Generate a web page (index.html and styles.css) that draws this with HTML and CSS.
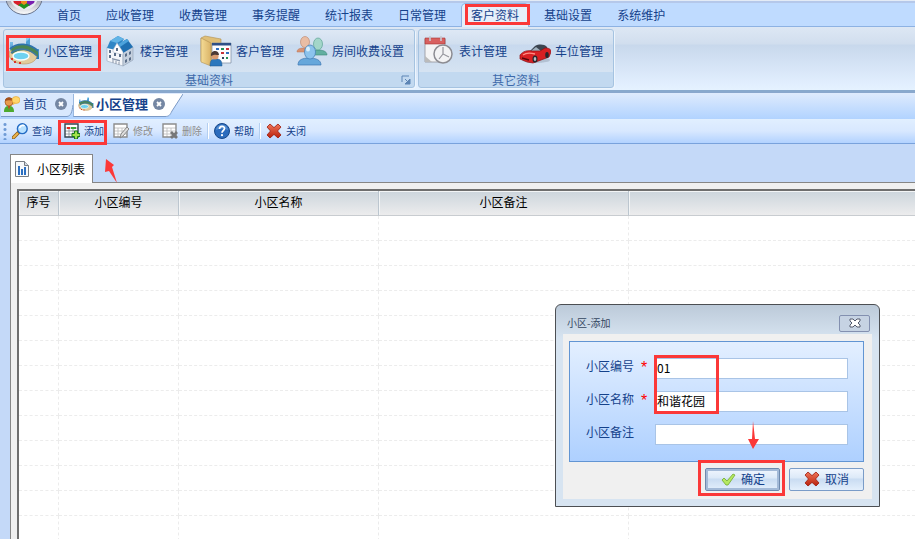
FILE: index.html
```html
<!DOCTYPE html>
<html lang="zh-CN">
<head>
    <meta charset="UTF-8">
    <meta name="viewport" content="width=device-width, initial-scale=1.0">
    <title>小区管理</title>
    <link rel="stylesheet" href="styles.css">
</head>
<body>
    <!-- 共用图标 -->
    <svg class="defs" width="0" height="0" aria-hidden="true">
        <defs>
            <linearGradient id="blue" x1="0" y1="0" x2="0" y2="1">
                <stop offset="0" stop-color="#8fd0f4"/>
                <stop offset="1" stop-color="#2375b8"/>
            </linearGradient>
            <linearGradient id="red" x1="0" y1="0" x2="0" y2="1">
                <stop offset="0" stop-color="#f0765a"/>
                <stop offset="1" stop-color="#b8200c"/>
            </linearGradient>
            <linearGradient id="folder" x1="0" y1="0" x2="1" y2="0">
                <stop offset="0" stop-color="#f5dc96"/>
                <stop offset="1" stop-color="#d9b266"/>
            </linearGradient>
            <linearGradient id="orb" x1="0" y1="0" x2="0" y2="1">
                <stop offset=".5" stop-color="#8d93a3"/>
                <stop offset="1" stop-color="#ffffff"/>
            </linearGradient>
            <symbol id="pool" viewBox="0 0 32 32">
                <path d="M2 7h3v12H2zM18 3h4v8h-4zM28 14h3v10h-3z" fill="url(#blue)"/>
                <path d="M22 3l-4 4v3h4z" fill="#4f9fd6"/>
                <path d="M1 19c0-5 7-8 14-8 8 0 14 4 14 9s-5 9-13 9C8 29 1 25 1 19z" fill="#e2cb9c" stroke="#b8935a" stroke-width=".6"/>
                <path d="M3 14c7-7 20-6 27 2v6C23 14 12 13 4 19z" fill="#4a8653"/>
                <path d="M2 14c7-7 20-6 28 2" fill="none" stroke="#2f73ab" stroke-width="1.800"/>
                <path d="M3 18c8-6 18-5 26 3" fill="none" stroke="#41789f" stroke-width="1.600"/>
                <ellipse cx="13" cy="21" rx="8" ry="4" fill="#6fd2f0" stroke="#f8ffff" stroke-width="1.300"/>
                <path d="M3 23h2v2H3zM6 26h2v2H6zM11 27h2v2h-2z" fill="#d8382a"/>
            </symbol>
            <symbol id="close-x" viewBox="0 0 16 16">
                <path d="M4 1l4 3.600 4-3.600 3 3-3.500 4 3.500 4-3 3-4-3.600-4 3.600-3-3 3.500-4L1 4z" fill="url(#red)" stroke="#9c1a0b" stroke-width=".8" stroke-linejoin="round"/>
            </symbol>
            <symbol id="grid" viewBox="0 0 16 16">
                <path d="M1 1h13v13H1z" fill="#fff" stroke="currentColor" stroke-width="1.400"/>
                <path d="M1 5h13M1 8h13M1 11h13M5 5v9M9 5v9" stroke="currentColor" stroke-width=".8" opacity=".6"/>
            </symbol>
            <symbol id="tab-close" viewBox="0 0 12 12">
                <circle cx="6" cy="6" r="6" fill="#7587a3"/>
                <path d="M4 4l4 4M8 4l-4 4" stroke="#fff" stroke-width="1.800"/>
            </symbol>
        </defs>
    </svg>

    <!-- 主菜单 -->
    <nav class="menu">
        <svg class="orb" width="40" height="16" viewBox="0 0 40 16" aria-hidden="true">
            <circle cx="20" cy="-5" r="18.500" fill="url(#orb)" stroke="#69748c"/>
            <circle cx="20" cy="-5" r="14" fill="#e9ebf0"/>
            <path d="M9-1h9v5l-3 1-5-3z" fill="#d81f2c"/>
            <path d="M31-1h-9v5l3 1 5-3z" fill="#7a1fb0"/>
            <path d="M14 4l6-3 6 3-6 4z" fill="#21931f"/>
            <path d="M17-1h6v3l-3 2-3-2z" fill="#f08a1c"/>
        </svg>
        <a href="#">首页</a>
        <a href="#">应收管理</a>
        <a href="#">收费管理</a>
        <a href="#">事务提醒</a>
        <a href="#">统计报表</a>
        <a href="#">日常管理</a>
        <a href="#" class="active">客户资料</a>
        <a href="#">基础设置</a>
        <a href="#">系统维护</a>
    </nav>

    <!-- 功能区 -->
    <div class="ribbon">
        <section class="group">
            <div class="group-items">
                <button type="button"><svg width="32" height="32"><use href="#pool"/></svg>小区管理</button>
                <button type="button">
                    <svg width="32" height="32" viewBox="0 0 32 32">
                        <path d="M3 12l16 5v14L3 26z" fill="#f4f6fa" stroke="#9aa9bd" stroke-width=".6"/>
                        <path d="M19 17l10-5v13l-10 6z" fill="#c5d0de" stroke="#8d9db3" stroke-width=".6"/>
                        <path d="M3 13L6 6l8-5 6 3-8 11z" fill="#2f86c6"/>
                        <path d="M6 6l8-5 6 3-7 4z" fill="#62b4e6"/>
                        <path d="M14 9l9-5 6 8-10 6z" fill="#2070b2"/>
                        <path d="M14 9l9-5 2 2-9 6z" fill="#4da3dc"/>
                        <path d="M9 15l4-7 6 9v3L9 17z" fill="#fdfdfe" stroke="#a5b2c4" stroke-width=".5"/>
                        <path d="M5 15h2v3H5zM5 20h2v3H5zM12 13h2v3h-2zM10 18h2v3h-2zM15 19h2v3h-2zM21 19l2-1v3l-2 1zM25 17l2-1v3l-2 1zM21 25l2-1v3l-2 1zM25 23l2-1v3l-2 1z" fill="#5b6f8a"/>
                        <path d="M8 23l8 2v1.500l-8-2z" fill="#8997ab"/>
                        <path d="M9 25v3M12 26v3M15 27v3" stroke="#8794a8"/>
                    </svg>楼宇管理</button>
                <button type="button">
                    <svg width="32" height="32" viewBox="0 0 32 32">
                        <path d="M1 3l4-2 16 3v22H1z" fill="#dfbf78" stroke="#b08f4f" stroke-width=".6"/>
                        <path d="M12 8h19v20H12z" fill="#fdfdff" stroke="#76869e" stroke-width=".7"/>
                        <path d="M12 8h19v2.500H12z" fill="#2d4f86"/>
                        <path d="M16 13h3v2h-3zM26 17h3v2h-3z" fill="#2f6fc0"/>
                        <path d="M21 13h3v2h-3zM26 22h2v2h-2z" fill="#22925a"/>
                        <path d="M26 13h3v2h-3zM21 17h3v2h-3z" fill="#c8333a"/>
                        <path d="M22 22h2v2h-2z" fill="#33435f"/>
                        <path d="M1 3l10 5v23L1 27z" fill="url(#folder)" stroke="#b08f4f" stroke-width=".6"/>
                        <path d="M10 31c0-6 2-7 6-7s6 1 6 7z" fill="#2c77bd" stroke="#1c568f" stroke-width=".5"/>
                        <circle cx="15" cy="21" r="3.600" fill="#d99b70"/>
                        <path d="M11 21c-1-6 8-7 8-1-3 0-4-1-8 1z" fill="#4b3a35"/>
                    </svg>客户管理</button>
                <button type="button">
                    <svg width="32" height="32" viewBox="0 0 32 32">
                        <path d="M1 17c0-3 3-4 6-4s7 1 7 4z" fill="#d89273" stroke="#b87557" stroke-width=".5"/>
                        <ellipse cx="9" cy="7" rx="4.500" ry="5.500" fill="#e9bda4" stroke="#ba8266" stroke-width=".6"/>
                        <path d="M15 20c0-4 3-5 7-5s9 1 9 5z" fill="#62afa0" stroke="#398677" stroke-width=".6"/>
                        <ellipse cx="22" cy="9" rx="4.500" ry="6" fill="#a3d6c9" stroke="#4d9888" stroke-width=".6"/>
                        <path d="M2 30c0-5 4-7 11-7s12 2 12 7z" fill="#66a7db" stroke="#3d77b1" stroke-width=".7"/>
                        <ellipse cx="14" cy="17" rx="5.500" ry="7" fill="#8cc3ed" stroke="#427cb5" stroke-width=".7"/>
                        <ellipse cx="12" cy="14" rx="2" ry="2.500" fill="#d8effd"/>
                    </svg>房间收费设置</button>
            </div>
            <h2 class="group-title">基础资料</h2>
            <svg class="launcher" width="10" height="10" viewBox="0 0 10 10" aria-hidden="true">
                <path d="M1 7V1h7" fill="none" stroke="#5d85b5"/>
                <path d="M9 4v5H4zM4 4l4 4" fill="#5d85b5" stroke="#5d85b5"/>
            </svg>
        </section>
        <section class="group">
            <div class="group-items">
                <button type="button">
                    <svg width="32" height="32" viewBox="0 0 32 32">
                        <path d="M2 4h20v23H2z" fill="#f4f4f5" stroke="#929299" stroke-width=".8"/>
                        <path d="M2 3h20v6H2z" fill="#d86060" stroke="#a63434" stroke-width=".6"/>
                        <path d="M7 1v5M18 1v5" stroke="#c9c9d2" stroke-width="1.600"/>
                        <path d="M2 21l7 6H2z" fill="#bbb"/>
                        <circle cx="20" cy="19" r="9" fill="#f3f3f4" stroke="#8c8c92" stroke-width="1.500"/>
                        <path d="M20 12v7l6 3M20 19l-4 5" fill="none" stroke="#95959b" stroke-width="1.200"/>
                    </svg>表计管理</button>
                <button type="button">
                    <svg width="32" height="32" viewBox="0 0 32 32">
                        <ellipse cx="17" cy="25" rx="14" ry="3" fill="#8794a6" opacity=".4"/>
                        <path d="M11 16l5-5c4-2 9-2 12 1l1 4-9 3z" fill="#3c4550"/>
                        <path d="M12 16l5-4 5 4z" fill="#9fb0bd"/>
                        <path d="M1 20c3-4 8-5 12-4l8 0 5-3c4 0 6 1 6 4l-2 5-8 3-8 3-6-1-7-3z" fill="#d82023" stroke="#8c1014" stroke-width=".7"/>
                        <path d="M4 20c4-3 8-2 12-1" fill="none" stroke="#ff8f84" stroke-width="1.300"/>
                        <path d="M3 23l7 2" stroke="#58080c" stroke-width="1.500"/>
                        <ellipse cx="16" cy="24" rx="2.500" ry="3.500" fill="#26282d"/>
                        <ellipse cx="16" cy="24" rx="1.300" ry="2" fill="#b9bcc4"/>
                        <ellipse cx="28" cy="20" rx="1.800" ry="3" fill="#26282d"/>
                    </svg>车位管理</button>
            </div>
            <h2 class="group-title">其它资料</h2>
        </section>
    </div>

    <!-- 页签 -->
    <div class="tabs">
        <div class="tab home">
            <svg width="16" height="16" viewBox="0 0 16 16">
                <path d="M0 16c0-5 2-6 5-6s5 1 5 6z" fill="#4eaa2f"/>
                <path d="M4 10l1 4 1-4z" fill="#e33a20"/>
                <circle cx="5" cy="6" r="4" fill="#e99b4d" stroke="#9b5219" stroke-width=".7"/>
                <path d="M1 5c0-5 8-5 8 0-3-1-5-1-8 0z" fill="#a4521d"/>
                <ellipse cx="12" cy="4" rx="4" ry="3.500" fill="#ffd66b" stroke="#e3a32c" stroke-width=".6"/>
                <path d="M9 6l0 3 3-2z" fill="#f4bd47"/>
            </svg>
            <a href="#">首页</a>
            <button type="button" aria-label="关闭首页"><svg width="12" height="12"><use href="#tab-close"/></svg></button>
        </div>
        <svg class="tail" width="6" height="23" viewBox="0 0 6 23" aria-hidden="true">
            <path d="M0 0h6v11c-1 7-2 11-6 11.500z" fill="#d9e8fd"/>
            <path d="M6 11c-1 7-2 11-6 11.500" fill="none" stroke="#7b9ac6"/>
        </svg>
        <div class="tab current">
            <svg width="16" height="16"><use href="#pool"/></svg>
            <a href="#">小区管理</a>
            <button type="button" aria-label="关闭小区管理"><svg width="12" height="12"><use href="#tab-close"/></svg></button>
        </div>
        <svg class="tail" width="18" height="23" viewBox="0 0 18 23" aria-hidden="true">
            <path d="M0 0h18L7 17c-2 4-3 5.500-7 5.500z" fill="#fff"/>
            <path d="M18 0L7 17c-2 4-3 5.500-7 5.500" fill="none" stroke="#7b9ac6"/>
        </svg>
    </div>

    <!-- 工具栏 -->
    <div class="toolbar">
        <span class="grip"></span>
        <button type="button">
            <svg width="16" height="16" viewBox="0 0 16 16">
                <path d="M1.500 14.500l5-5" stroke="#8b5c16" stroke-width="3.600" stroke-linecap="round"/>
                <path d="M1.500 14.500l4-4" stroke="#eeb64c" stroke-width="2" stroke-linecap="round"/>
                <circle cx="10.300" cy="5.700" r="4.900" fill="#b7e0ff" stroke="#236bc4" stroke-width="1.400"/>
                <path d="M7.500 5c1-3 4-3 5-2" fill="none" stroke="#fff" stroke-width="1.500"/>
            </svg>查询</button>
        <span class="space"></span>
        <button type="button">
            <svg class="dark" width="16" height="16" viewBox="0 0 16 16">
                <use href="#grid" width="16" height="16"/>
                <path d="M3 4h3v2H3z" fill="#e02a20"/>
                <path d="M7 4h5v2H7z" fill="#3ba33b"/>
                <path d="M10.500 8h3v2.500H16v3h-2.500V16h-3v-2.500H8v-3h2.500z" fill="#a3e34a" stroke="#187b1b"/>
            </svg>添加</button>
        <button type="button" disabled>
            <svg width="16" height="16" viewBox="0 0 16 16">
                <use href="#grid" width="16" height="16"/>
                <path d="M7 15l1-4 6-7 2 2-6 7z" fill="#ddd" stroke="#888"/>
            </svg>修改</button>
        <button type="button" disabled>
            <svg width="16" height="16" viewBox="0 0 16 16">
                <use href="#grid" width="16" height="16"/>
                <path d="M9 9l6 6M15 9l-6 6" stroke="#777" stroke-width="2.800"/>
            </svg>删除</button>
        <span class="sep"></span>
        <button type="button">
            <svg width="16" height="16" viewBox="0 0 16 16">
                <circle cx="8" cy="8" r="7.500" fill="#2c6cbd" stroke="#174889"/>
                <path d="M2 7c1-7 11-7 12 0-4-2-8-2-12 0z" fill="#73a6df" opacity=".6"/>
                <path d="M5.500 6c0-3.500 5-3.500 5-.5C10.500 7.500 8 7.500 8 9.800" fill="none" stroke="#fff" stroke-width="1.700"/>
                <circle cx="8" cy="12.200" r="1.100" fill="#fff"/>
            </svg>帮助</button>
        <span class="sep"></span>
        <button type="button"><svg width="16" height="16"><use href="#close-x"/></svg>关闭</button>
    </div>

    <main>
        <div class="page-tab">
            <svg width="14" height="16" viewBox="0 0 14 16">
                <path d="M.5.5h9l4 4v11H.5z" fill="#f7f9fb" stroke="#777d84"/>
                <path d="M9.500.5v4h4" fill="#d4dae1" stroke="#777d84"/>
                <path d="M3 5h2v9H3zM6 8h2v6H6zM9 6h2v8H9z" fill="#2c6fc1"/>
            </svg>
            小区列表
        </div>
        <div class="page-body">
            <table>
                <colgroup>
                    <col class="col-no">
                    <col class="col-code">
                    <col class="col-name">
                    <col class="col-memo">
                    <col>
                </colgroup>
                <thead>
                    <tr><th>序号</th><th>小区编号</th><th>小区名称</th><th>小区备注</th><th></th></tr>
                </thead>
                <tbody>
                    <tr><td></td><td></td><td></td><td></td><td></td></tr>
                    <tr><td></td><td></td><td></td><td></td><td></td></tr>
                    <tr><td></td><td></td><td></td><td></td><td></td></tr>
                    <tr><td></td><td></td><td></td><td></td><td></td></tr>
                    <tr><td></td><td></td><td></td><td></td><td></td></tr>
                    <tr><td></td><td></td><td></td><td></td><td></td></tr>
                    <tr><td></td><td></td><td></td><td></td><td></td></tr>
                    <tr><td></td><td></td><td></td><td></td><td></td></tr>
                    <tr><td></td><td></td><td></td><td></td><td></td></tr>
                    <tr><td></td><td></td><td></td><td></td><td></td></tr>
                    <tr><td></td><td></td><td></td><td></td><td></td></tr>
                    <tr><td></td><td></td><td></td><td></td><td></td></tr>
                    <tr><td></td><td></td><td></td><td></td><td></td></tr>
                </tbody>
            </table>
        </div>
    </main>

    <!-- 添加窗口 -->
    <div class="dialog" role="dialog" aria-labelledby="dialog-title">
        <div class="dialog-head">
            <span id="dialog-title">小区-添加</span>
            <button type="button" aria-label="关闭">
                <svg width="12" height="10" viewBox="0 0 12 10">
                    <path d="M1 1h3l2 2 2-2h3v2L9 5l2 2v2H8L6 7 4 9H1V7l2-2-2-2z" fill="#fff" stroke="#555b6c"/>
                </svg>
            </button>
        </div>
        <form class="dialog-body" onsubmit="return false">
            <div class="fields">
                <label for="code">小区编号 <em>*</em></label>
                <input type="text" id="code" value="01">
                <label for="name">小区名称 <em>*</em></label>
                <input type="text" id="name" value="和谐花园">
                <label for="memo">小区备注</label>
                <input type="text" id="memo">
            </div>
            <div class="actions">
                <button type="submit" class="default">
                    <svg width="16" height="16" viewBox="0 0 16 16">
                        <path d="M2 9l2-2 3 3 6-7 2 1-7 10-2 0z" fill="#b5e861" stroke="#71a92f" stroke-width=".8"/>
                    </svg>确定</button>
                <button type="button"><svg width="16" height="16"><use href="#close-x"/></svg>取消</button>
            </div>
        </form>
    </div>

    <!-- 操作步骤标注 -->
    <svg class="marks" width="915" height="539" viewBox="0 0 915 539" aria-hidden="true">
        <g fill="none" stroke="#fb3838" stroke-width="3">
            <rect x="7.500" y="36.500" width="92" height="33"/>
            <rect x="466.500" y="5.500" width="62" height="18"/>
            <rect x="59.500" y="121.500" width="46" height="22"/>
            <rect x="655.500" y="356.500" width="62" height="56"/>
            <rect x="699.500" y="461.500" width="84" height="33"/>
        </g>
        <path d="M106 159l8 6-2 2 5 16-8-12-4 1z" fill="#fb3838"/>
        <path d="M753 421l2 18 4 0-6 10-5-10 4 0z" fill="#fb3838"/>
    </svg>
</body>
</html>
```
FILE: styles.css
```css
* {
    box-sizing: border-box;
}

body {
    margin: 0;
    min-height: 100vh;
    overflow: hidden;
    background-color: #c4d9f8;
    color: #15428b;
    font-family: "Noto Sans CJK SC", sans-serif;
    font-size: 12px;
    line-height: 16px;
}

a {
    color: inherit;
    text-decoration: none;
}

button {
    display: flex;
    align-items: center;
    padding: 0;
    border: none;
    background: none;
    color: inherit;
    font: inherit;
    cursor: pointer;
    white-space: nowrap;
}

svg {
    flex: none;
    display: block;
}

.defs {
    position: absolute;
}

/* 主菜单 */
.menu {
    display: flex;
    align-items: flex-end;
    height: 27px;
    border-top: 1px solid #e3ebf6;
    border-bottom: 1px solid #8db2e3;
    background: linear-gradient(#b5c8ea 2px, #bfdbff 2px);
}

.menu a {
    margin-right: 7px;
    padding: 3px 9px;
}

.menu a.active {
    margin-bottom: -1px;
    padding-bottom: 4px;
    border-radius: 4px 4px 0 0;
    background-color: #e6effa;
    box-shadow: 0 0 0 1px #8db2e3;
    clip-path: inset(-1px -1px 0 -1px);
}

.menu .orb {
    align-self: flex-start;
    margin: 0 4px;
}

/* 功能区 */
.ribbon {
    display: flex;
    gap: 3px;
    padding: 2px 3px;
    border-bottom: 2px solid #89a9cd;
    background: linear-gradient(#dde7f4, #d1deee 17px, #c8d8ec 18px, #e1eefe 56px, #e5f2ff);
}

.group {
    position: relative;
    border: 1px solid #a5c3e1;
    border-radius: 3px;
    background: linear-gradient(#dee8f5, #d1dfef 14px, #c8d9ee 15px, #d5e3f2 42px, #c2d9f0 42px);
    box-shadow: 1px 1px 0 #edf5fd;
}

.group-items {
    display: flex;
    gap: 12px;
    height: 42px;
    padding: 0 10px 0 4px;
}

.group-items button {
    gap: 4px;
}

.group-title {
    margin: 0;
    color: #3e6aaa;
    font-size: 12px;
    font-weight: normal;
    line-height: 15px;
    text-align: center;
}

.launcher {
    position: absolute;
    right: 3px;
    bottom: 2px;
}

/* 页签 */
.tabs {
    display: flex;
    align-items: flex-end;
    height: 27px;
    padding: 0 0 2px 1px;
    border-top: 1px solid #8aa7cd;
    background: linear-gradient(#dfebfd, #b1d3ff);
}

.tab {
    display: flex;
    align-items: center;
    height: 23px;
    padding-bottom: 2px;
}

.tab.home {
    gap: 3px;
    padding-left: 3px;
    border-bottom: 1px solid #7b9ac6;
    background-color: #d9e8fd;
}

.tab.home button {
    margin-left: 5px;
}

.tab.current {
    gap: 2px;
    padding-left: 4px;
    border-left: 1px solid #9ab8df;
    border-bottom: 1px solid #7b9ac6;
    background-color: #ffffff;
    font-size: 13px;
    font-weight: bold;
}

.tab.current button {
    margin-left: 3px;
}

/* 工具栏 */
.toolbar {
    display: flex;
    align-items: center;
    gap: 1px;
    height: 25px;
    padding-left: 3px;
    border-bottom: 1px solid #79a2dc;
    background: linear-gradient(#e1efff, #d8e8ff 12px, #b2d2ff);
    font-size: 10px;
}

.toolbar button {
    gap: 4px;
    padding: 0 4px;
}

.toolbar button:disabled {
    color: #8d8d8d;
}

.toolbar .dark {
    color: #33434f;
}

.grip {
    width: 4px;
    height: 18px;
    background: radial-gradient(circle, #6f9bd6 1px, transparent 2px) 0 0 / 4px 5px;
}

.space {
    width: 2px;
}

.sep {
    width: 2px;
    height: 16px;
    border-left: 1px solid #b4cff0;
    background-color: #ffffff;
}

/* 列表 */
main {
    padding: 10px 0 0 10px;
    color: #000000;
}

.page-tab {
    display: flex;
    align-items: center;
    gap: 8px;
    position: relative;
    width: fit-content;
    height: 29px;
    padding: 0 7px 1px 4px;
    border: 1px solid #868686;
    border-bottom: none;
    background-color: #ffffff;
}

.page-body {
    margin-top: -1px;
    padding: 6px 0 0 6px;
    border-top: 1px solid #868686;
    border-left: 1px solid #868686;
    background-color: #f0f0f0;
}

table {
    width: 100%;
    border-top: 2px solid #6e6e6e;
    border-left: 2px solid #6e6e6e;
    border-spacing: 0;
    background-color: #ffffff;
    table-layout: fixed;
}

.col-no {
    width: 40px;
}

.col-code {
    width: 120px;
}

.col-name {
    width: 200px;
}

.col-memo {
    width: 250px;
}

th {
    height: 25px;
    padding: 0 0 2px;
    border-right: 1px solid #bcc6cf;
    border-bottom: 1px solid #c8ccd0;
    background: linear-gradient(#ccd5dc, #ececed);
    box-shadow: inset 1px 1px 0 #f3f5f6;
    font-weight: normal;
}

td {
    height: 25px;
    padding: 0;
    border-right: 1px dashed #ececec;
    border-bottom: 1px dashed #ececec;
}

th:last-child,
td:last-child {
    border-right: none;
}

/* 添加窗口 */
.dialog {
    position: absolute;
    top: 304px;
    left: 555px;
    width: 325px;
    padding: 0 7px 7px;
    border: 1px solid #4c4f53;
    border-radius: 6px 6px 0 0;
    background: linear-gradient(#bccad9, #d7e4f1 34px);
}

.dialog-head {
    display: flex;
    align-items: center;
    justify-content: space-between;
    height: 29px;
    padding: 7px 2px 0 4px;
    color: #34465f;
    font-size: 10px;
}

.dialog-head button {
    justify-content: center;
    width: 31px;
    height: 17px;
    border: 1px solid #8390b0;
    border-radius: 2px;
    background-color: #c6d3e3;
}

.dialog-body {
    padding: 7px 8px 8px 6px;
    background-color: #f0f0f0;
}

.fields {
    display: grid;
    grid-template-columns: 69px 1fr;
    row-gap: 12px;
    padding: 16px 15px 16px 16px;
    border: 1px solid #6295d3;
    background: linear-gradient(#e3efff, #aed0ff);
}

.fields label {
    display: flex;
    gap: 7px;
    line-height: 16px;
}

.fields em {
    color: #ff0000;
    font-family: "Liberation Sans", sans-serif;
    font-size: 16px;
    font-style: normal;
    line-height: 20px;
}

.fields input {
    width: 100%;
    height: 21px;
    padding: 0 1px 3px;
    border: 1px solid #a9c4e6;
    background-color: #ffffff;
    color: #000000;
    font: inherit;
}

.actions {
    display: flex;
    justify-content: flex-end;
    gap: 9px;
    margin-top: 6px;
}

.actions button {
    justify-content: center;
    gap: 5px;
    width: 75px;
    height: 23px;
    padding-bottom: 2px;
    border: 1px solid #7a9cc8;
    border-radius: 2px;
    background: linear-gradient(#f0f6fe, #dce9f8 9px, #c9dcf2 10px, #e3effc);
}

.actions .default {
    border-color: #6d89ae;
    box-shadow: inset 0 0 0 2px #a3bad8;
}

/* 标注层 */
.marks {
    position: absolute;
    top: 0;
    left: 0;
    pointer-events: none;
}
```
